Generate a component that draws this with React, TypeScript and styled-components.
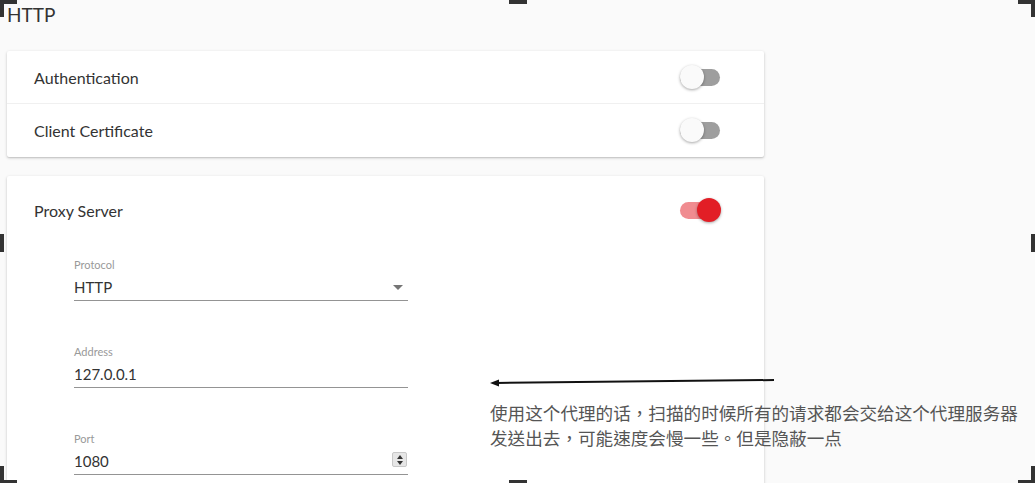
import React from 'react';
import styled, { createGlobalStyle } from 'styled-components';

const GlobalStyle = createGlobalStyle`
  html, body {
    margin: 0;
    padding: 0;
    background: #fafafa;
  }
  body {
    font-family: Lato, 'Noto Sans', 'Liberation Sans', sans-serif;
    color: #333;
  }
`;

const Page = styled.div`
  position: relative;
  width: 1035px;
  height: 483px;
  overflow: hidden;
  box-sizing: border-box;
  padding-left: 7px;
  background: #fafafa;
`;

const Title = styled.div`
  font-size: 19px;
  line-height: 30px;
  color: #333;
`;

const Card = styled.div<{ $gap: number }>`
  width: 757px;
  margin-top: ${p => p.$gap}px;
  background: #fff;
  border-radius: 2px;
  box-shadow: 0 1px 3px rgba(0, 0, 0, 0.22), 0 1px 1px rgba(0, 0, 0, 0.06);
`;

const Row = styled.div<{ $height: number; $divider?: boolean }>`
  display: flex;
  align-items: center;
  justify-content: space-between;
  box-sizing: border-box;
  height: ${p => p.$height}px;
  padding: 0 44px 0 27px;
  border-top: ${p => (p.$divider ? '1px solid #f0f0f0' : 'none')};
  font-size: 16px;
  color: #333;
`;

const Track = styled.div<{ $on: boolean }>`
  position: relative;
  width: 40px;
  height: 17px;
  border-radius: 9px;
  background: ${p => (p.$on ? '#f08c90' : '#9e9e9e')};
`;

const Thumb = styled.div<{ $on: boolean }>`
  position: absolute;
  top: -4px;
  left: ${p => (p.$on ? '17px' : '0')};
  width: 24px;
  height: 24px;
  border-radius: 50%;
  background: ${p => (p.$on ? '#e21e26' : '#fafafa')};
  box-shadow: 0 1px 3px rgba(0, 0, 0, 0.35);
`;

const Fields = styled.div`
  display: flex;
  flex-direction: column;
  gap: 44px;
  padding: 14px 0 60px 67px;
`;

const Field = styled.div`
  width: 334px;
`;

const Label = styled.div`
  font-size: 11px;
  line-height: 14px;
  color: #999;
  margin-bottom: 2px;
`;

const ValueRow = styled.div`
  display: flex;
  align-items: center;
  justify-content: space-between;
  box-sizing: border-box;
  height: 27px;
  border-bottom: 1px solid #949494;
  font-size: 15px;
  line-height: 26px;
  color: #333;
`;

const Caret = styled.div`
  width: 0;
  height: 0;
  margin-right: 5px;
  border-left: 5px solid transparent;
  border-right: 5px solid transparent;
  border-top: 5px solid #757575;
`;

const Spinner = styled.div`
  display: flex;
  flex-direction: column;
  align-items: center;
  justify-content: center;
  gap: 2px;
  width: 15px;
  height: 15px;
  margin-right: 1px;
  margin-top: -3px;
  background: #e6e6e6;
  border: 1px solid #c8c8c8;
  box-sizing: border-box;
  border-radius: 2px;
`;

const SpinArrow = styled.div<{ $up: boolean }>`
  width: 0;
  height: 0;
  border-left: 3.5px solid transparent;
  border-right: 3.5px solid transparent;
  ${p => (p.$up ? 'border-bottom: 4px solid #333;' : 'border-top: 4px solid #333;')}
`;

const Note = styled.div`
  position: absolute;
  left: 490px;
  top: 400px;
  font-family: 'Noto Sans CJK TC', 'Noto Sans CJK SC', sans-serif;
  font-size: 17.6px;
  line-height: 25px;
  color: #555;
  white-space: nowrap;
`;

const ArrowSvg = styled.svg`
  position: absolute;
  left: 488px;
  top: 374px;
`;

const Handle = styled.div<{ $x: number; $y: number; $w: number; $h: number }>`
  position: absolute;
  left: ${p => p.$x}px;
  top: ${p => p.$y}px;
  width: ${p => p.$w}px;
  height: ${p => p.$h}px;
  background: #333;
`;

function Switch({ on }: { on: boolean }) {
  return (
    <Track $on={on}>
      <Thumb $on={on} />
    </Track>
  );
}

const handles = [
  [0, 0, 17, 4], [0, 0, 4, 17],
  [509, 0, 18, 4],
  [1018, 0, 17, 4], [1031, 0, 4, 17],
  [0, 234, 4, 18], [1031, 234, 4, 18],
  [0, 466, 4, 17], [0, 480, 17, 3],
  [509, 480, 18, 3],
  [1018, 480, 17, 3], [1031, 466, 4, 17],
];

export default function App() {
  return (
    <>
      <GlobalStyle />
      <Page>
        <Title>HTTP</Title>
        <Card $gap={21}>
          <Row $height={52}>
            <span>Authentication</span>
            <Switch on={false} />
          </Row>
          <Row $height={54} $divider>
            <span>Client Certificate</span>
            <Switch on={false} />
          </Row>
        </Card>
        <Card $gap={19}>
          <Row $height={68}>
            <span>Proxy Server</span>
            <Switch on />
          </Row>
          <Fields>
            <Field>
              <Label>Protocol</Label>
              <ValueRow>
                <span>HTTP</span>
                <Caret />
              </ValueRow>
            </Field>
            <Field>
              <Label>Address</Label>
              <ValueRow>
                <span>127.0.0.1</span>
              </ValueRow>
            </Field>
            <Field>
              <Label>Port</Label>
              <ValueRow>
                <span>1080</span>
                <Spinner>
                  <SpinArrow $up />
                  <SpinArrow $up={false} />
                </Spinner>
              </ValueRow>
            </Field>
          </Fields>
        </Card>

        <ArrowSvg width="290" height="16" viewBox="0 0 290 16">
          <line x1="286" y1="6" x2="8" y2="9" stroke="#111" strokeWidth="2" />
          <polygon points="2,9 11,5.5 11,12.5" fill="#111" />
        </ArrowSvg>
        <Note lang="zh-Hant">
          使用这个代理的话，扫描的时候所有的请求都会交给这个代理服务器
          <br />
          发送出去，可能速度会慢一些。但是隐蔽一点
        </Note>

        {handles.map(([x, y, w, h], i) => (
          <Handle key={i} $x={x} $y={y} $w={w} $h={h} />
        ))}
      </Page>
    </>
  );
}
